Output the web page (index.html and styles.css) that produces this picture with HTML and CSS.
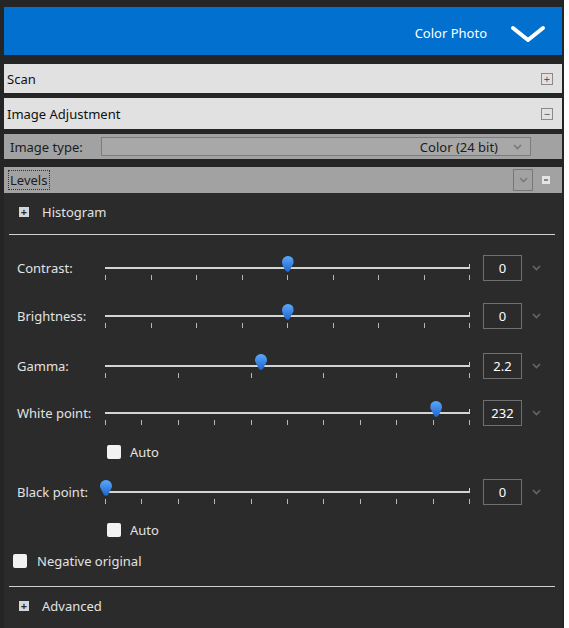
FILE: index.html
```html
<!DOCTYPE html>
<html lang="en">
<head>
    <meta charset="UTF-8">
    <meta name="viewport" content="width=device-width, initial-scale=1.0">
    <title>Scanner Settings</title>
    <link rel="stylesheet" href="styles.css">
</head>
<body>
    <div class="window">
        <div class="mode-bar">
            <span class="mode-name">Color Photo</span>
            <svg class="mode-chevron" width="36" height="18" viewBox="0 0 36 18">
                <polyline points="3,3 18,15 33,3" fill="none" stroke="#fff" stroke-width="4" stroke-linecap="round" stroke-linejoin="round"/>
            </svg>
        </div>

        <div class="section-head first">
            <span>Scan</span>
            <span class="box-btn">+</span>
        </div>
        <div class="section-head tall">
            <span>Image Adjustment</span>
            <span class="box-btn">&minus;</span>
        </div>

        <div class="gray-row type-row">
            <span class="type-label">Image type:</span>
            <div class="combo">
                <span>Color (24 bit)</span>
                <svg class="small-chev" width="9" height="6" viewBox="0 0 9 6"><polyline points="1,1 4.5,4.5 8,1" fill="none" stroke="#7a7a7a" stroke-width="1.6"/></svg>
            </div>
        </div>

        <div class="gray-row levels-row">
            <span class="focus-label">Levels</span>
            <span class="drop-btn">
                <svg class="small-chev" width="9" height="6" viewBox="0 0 9 6"><polyline points="1,1 4.5,4.5 8,1" fill="none" stroke="#7a7a7a" stroke-width="1.6"/></svg>
            </span>
            <span class="mini-minus"></span>
        </div>

        <div class="panel">
            <div class="expander">
                <span class="plus-icon">+</span>
                <span>Histogram</span>
            </div>
            <div class="rule"></div>

            <div class="controls">
                <div class="slider-row">
                    <span class="label">Contrast:</span>
                    <div class="slider">
                        <div class="track"><span class="thumb" style="left: 50%"></span></div>
                        <div class="ticks"><i></i><i></i><i></i><i></i><i></i><i></i><i></i><i></i><i></i></div>
                    </div>
                    <span class="value">0</span>
                    <svg class="spin" width="9" height="6" viewBox="0 0 9 6"><polyline points="1,1 4.5,4.5 8,1" fill="none" stroke="#666" stroke-width="1.6"/></svg>
                </div>

                <div class="slider-row">
                    <span class="label">Brightness:</span>
                    <div class="slider">
                        <div class="track"><span class="thumb" style="left: 50%"></span></div>
                        <div class="ticks"><i></i><i></i><i></i><i></i><i></i><i></i><i></i><i></i><i></i></div>
                    </div>
                    <span class="value">0</span>
                    <svg class="spin" width="9" height="6" viewBox="0 0 9 6"><polyline points="1,1 4.5,4.5 8,1" fill="none" stroke="#666" stroke-width="1.6"/></svg>
                </div>

                <div class="slider-row gap-more">
                    <span class="label">Gamma:</span>
                    <div class="slider">
                        <div class="track"><span class="thumb" style="left: 42.7%"></span></div>
                        <div class="ticks"><i></i><i></i><i></i><i></i><i></i><i></i></div>
                    </div>
                    <span class="value">2.2</span>
                    <svg class="spin" width="9" height="6" viewBox="0 0 9 6"><polyline points="1,1 4.5,4.5 8,1" fill="none" stroke="#666" stroke-width="1.6"/></svg>
                </div>

                <div class="slider-row gap-less">
                    <span class="label">White point:</span>
                    <div class="slider">
                        <div class="track"><span class="thumb" style="left: 91%"></span></div>
                        <div class="ticks"><i></i><i></i><i></i><i></i><i></i><i></i><i></i><i></i><i></i><i></i><i></i></div>
                    </div>
                    <span class="value">232</span>
                    <svg class="spin" width="9" height="6" viewBox="0 0 9 6"><polyline points="1,1 4.5,4.5 8,1" fill="none" stroke="#666" stroke-width="1.6"/></svg>
                </div>
                <label class="check auto-check"><span class="box"></span>Auto</label>

                <div class="slider-row after-check">
                    <span class="label">Black point:</span>
                    <div class="slider">
                        <div class="track"><span class="thumb" style="left: 0%"></span></div>
                        <div class="ticks"><i></i><i></i><i></i><i></i><i></i><i></i><i></i><i></i><i></i><i></i><i></i></div>
                    </div>
                    <span class="value">0</span>
                    <svg class="spin" width="9" height="6" viewBox="0 0 9 6"><polyline points="1,1 4.5,4.5 8,1" fill="none" stroke="#666" stroke-width="1.6"/></svg>
                </div>
                <label class="check auto-check"><span class="box"></span>Auto</label>

                <label class="check negative"><span class="box"></span>Negative original</label>
            </div>

            <div class="rule lower"></div>
            <div class="expander">
                <span class="plus-icon">+</span>
                <span>Advanced</span>
            </div>
        </div>
    </div>
</body>
</html>
```

FILE: styles.css
```css
body {
    margin: 0;
    background-color: #fff;
    font-family: "Noto Sans", "Open Sans", sans-serif;
    font-size: 13px;
}

.window {
    width: 564px;
    height: 628px;
    box-sizing: border-box;
    padding: 7px 2px 0 4px;
    background-color: #252525;
    display: flex;
    flex-direction: column;
}

/* blue scan mode bar */
.mode-bar {
    height: 48px;
    background-color: #0170cf;
    display: flex;
    align-items: center;
    justify-content: flex-end;
    padding-right: 16px;
    flex-shrink: 0;
}

.mode-name {
    color: #fff;
    margin-right: 23px;
    padding-top: 4px;
}

.mode-chevron {
    margin-top: 6px;
}

/* light collapsible section headers */
.section-head {
    height: 29px;
    margin-top: 5px;
    background-color: #e1e1e1;
    color: #111;
    display: flex;
    align-items: center;
    justify-content: space-between;
    padding: 0 9px 0 3px;
    flex-shrink: 0;
}

.section-head.first {
    margin-top: 9px;
}

.section-head.tall {
    height: 31px;
}

.box-btn {
    width: 10px;
    height: 10px;
    border: 1px solid #8a8a8a;
    color: #555;
    font-size: 11px;
    line-height: 9px;
    text-align: center;
}

/* gray property rows */
.gray-row {
    background-color: #a2a2a2;
    color: #1c1c1c;
    display: flex;
    align-items: center;
    flex-shrink: 0;
}

.type-row {
    height: 25px;
    margin-top: 5px;
    padding-left: 6px;
}

.type-label {
    width: 91px;
}

.combo {
    width: 430px;
    height: 19px;
    border: 1px solid #7c7c7c;
    background-color: #a8a8a8;
    display: flex;
    align-items: center;
    justify-content: flex-end;
    padding-right: 8px;
    box-sizing: border-box;
}

.combo span {
    margin-right: 15px;
}

.levels-row {
    height: 26px;
    margin-top: 8px;
    padding-left: 4px;
}

.focus-label {
    border: 1px dotted #333;
    padding: 0 2px 0 1px;
    line-height: 18px;
}

.drop-btn {
    width: 18px;
    height: 20px;
    border: 1px solid #777;
    margin-left: auto;
    display: flex;
    align-items: center;
    justify-content: center;
}

.mini-minus {
    width: 8px;
    height: 8px;
    background-color: #e4e4e4;
    margin: 0 12px 0 9px;
    position: relative;
}

.mini-minus::after {
    content: "";
    position: absolute;
    left: 2px;
    right: 2px;
    top: 3px;
    height: 2px;
    background-color: #888;
}

/* dark levels panel */
.panel {
    flex: 1;
    background-color: #2b2b2b;
    color: #e2e2e2;
    display: flex;
    flex-direction: column;
}

.expander {
    height: 38px;
    display: flex;
    align-items: center;
    padding-left: 15px;
}

.plus-icon {
    width: 10px;
    height: 10px;
    background-color: #d6d6d6;
    color: #2b2b2b;
    font-size: 11px;
    font-weight: bold;
    line-height: 10px;
    text-align: center;
    margin-right: 13px;
}

.rule {
    height: 1px;
    background-color: #cfcfcf;
    margin: 3px 7px 0 5px;
}

.rule.lower {
    margin-top: 17px;
}

.controls {
    display: flex;
    flex-direction: column;
    padding: 20px 0 0 13px;
}

.slider-row {
    display: flex;
    align-items: center;
    height: 26px;
    margin-bottom: 22px;
}

.slider-row.gap-more {
    margin-top: 2px;
}

.slider-row.gap-less {
    margin-top: -1px;
    margin-bottom: 18px;
}

.slider-row.after-check {
    margin-top: 19px;
    margin-bottom: 17px;
}

.label {
    width: 88px;
}

.slider {
    width: 365px;
    height: 26px;
    padding-top: 12px;
    box-sizing: border-box;
}

.track {
    position: relative;
    height: 2px;
    background-color: #d4d4d4;
    border-left: 1px solid #d4d4d4;
    border-right: 1px solid #d4d4d4;
}

.track::after {
    content: "";
    position: absolute;
    right: -1px;
    top: -3px;
    width: 1px;
    height: 4px;
    background-color: #d4d4d4;
}

/* teardrop handle: round top, point at the bottom */
.thumb {
    position: absolute;
    top: -11px;
    width: 12px;
    height: 16px;
    margin-left: -6px;
    background: linear-gradient(#5aa8ff, #1e64c8);
    border-radius: 6px 6px 6px 6px / 6px 6px 10px 10px;
    clip-path: polygon(0 0, 100% 0, 100% 45%, 62% 100%, 38% 100%, 0 45%);
    z-index: 1;
}

.ticks {
    display: flex;
    justify-content: space-between;
    margin-top: 6px;
}

.ticks i {
    width: 1px;
    height: 5px;
    background-color: #b8b8b8;
}

.value {
    width: 37px;
    height: 24px;
    border: 1px solid #6f6f6f;
    margin-left: 13px;
    color: #fff;
    text-align: center;
    line-height: 24px;
}

.spin {
    margin-left: 10px;
}

.check {
    display: flex;
    align-items: center;
    height: 16px;
}

.check .box {
    width: 14px;
    height: 14px;
    background-color: #f2f2f2;
    border-radius: 2px;
    margin-right: 9px;
}

.auto-check {
    padding-left: 90px;
}

.negative {
    margin: 15px 0 0 -4px;
    color: #e2e2e2;
}

.negative .box {
    margin-right: 10px;
}
```
